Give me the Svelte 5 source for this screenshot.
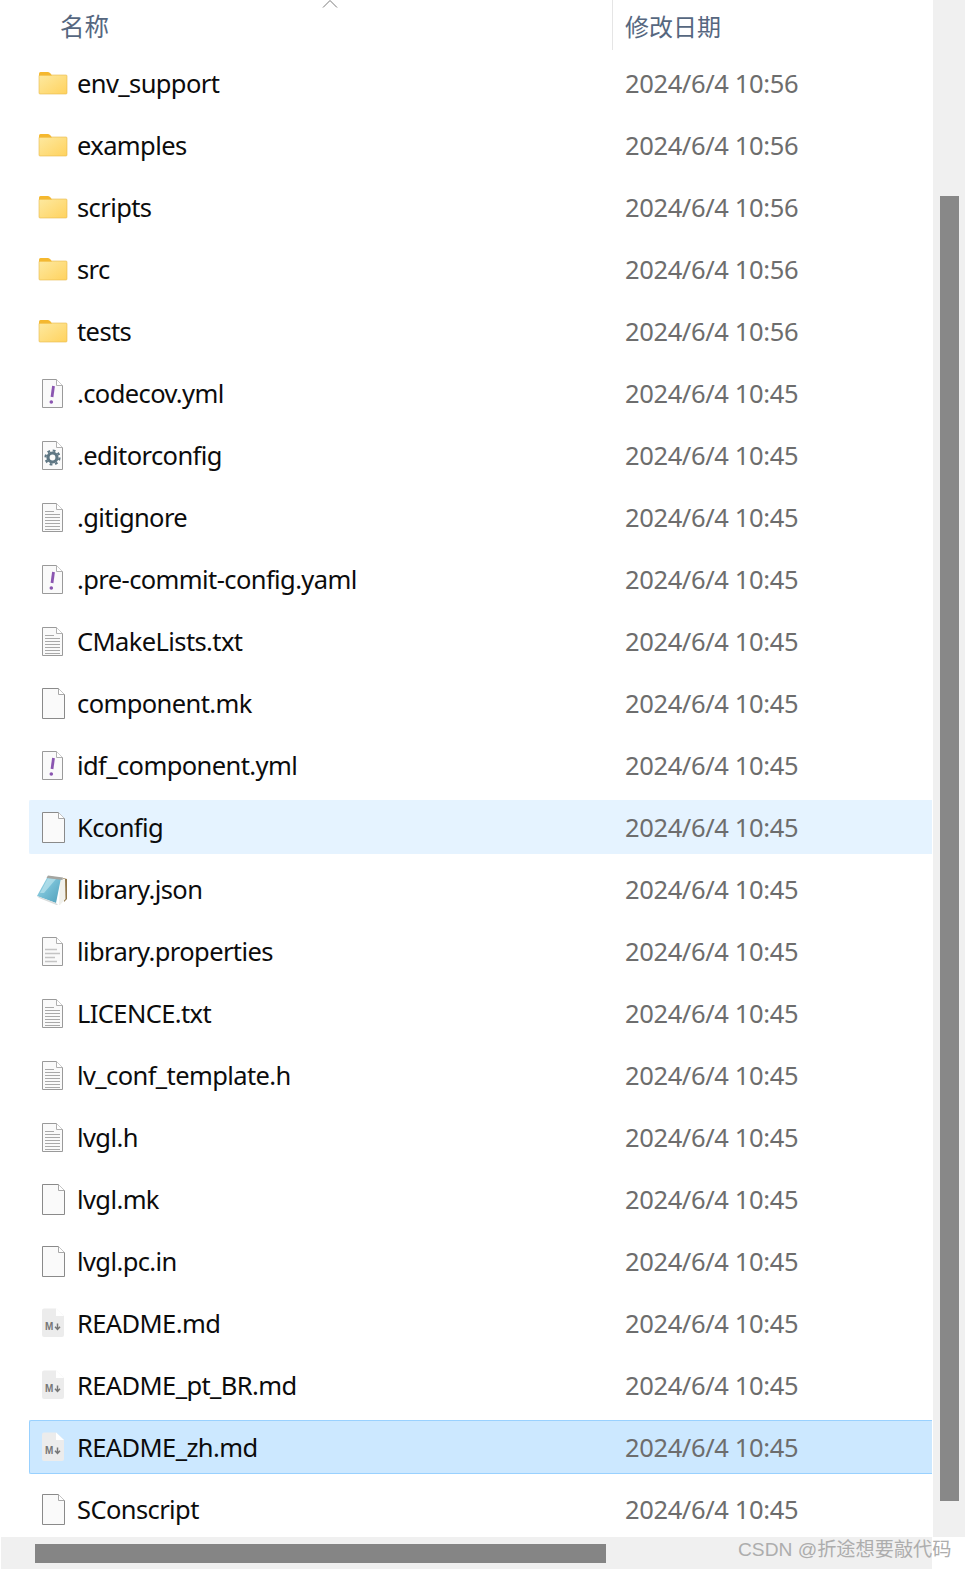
<script>
  const files = [
    { name: 'env_support', date: '2024/6/4 10:56', icon: 'folder' },
    { name: 'examples', date: '2024/6/4 10:56', icon: 'folder' },
    { name: 'scripts', date: '2024/6/4 10:56', icon: 'folder' },
    { name: 'src', date: '2024/6/4 10:56', icon: 'folder' },
    { name: 'tests', date: '2024/6/4 10:56', icon: 'folder' },
    { name: '.codecov.yml', date: '2024/6/4 10:45', icon: 'yaml' },
    { name: '.editorconfig', date: '2024/6/4 10:45', icon: 'gear' },
    { name: '.gitignore', date: '2024/6/4 10:45', icon: 'text' },
    { name: '.pre-commit-config.yaml', date: '2024/6/4 10:45', icon: 'yaml' },
    { name: 'CMakeLists.txt', date: '2024/6/4 10:45', icon: 'text' },
    { name: 'component.mk', date: '2024/6/4 10:45', icon: 'blank' },
    { name: 'idf_component.yml', date: '2024/6/4 10:45', icon: 'yaml' },
    { name: 'Kconfig', date: '2024/6/4 10:45', icon: 'blank', state: 'hover' },
    { name: 'library.json', date: '2024/6/4 10:45', icon: 'notepad' },
    { name: 'library.properties', date: '2024/6/4 10:45', icon: 'props' },
    { name: 'LICENCE.txt', date: '2024/6/4 10:45', icon: 'text' },
    { name: 'lv_conf_template.h', date: '2024/6/4 10:45', icon: 'text' },
    { name: 'lvgl.h', date: '2024/6/4 10:45', icon: 'text' },
    { name: 'lvgl.mk', date: '2024/6/4 10:45', icon: 'blank' },
    { name: 'lvgl.pc.in', date: '2024/6/4 10:45', icon: 'blank' },
    { name: 'README.md', date: '2024/6/4 10:45', icon: 'md' },
    { name: 'README_pt_BR.md', date: '2024/6/4 10:45', icon: 'md' },
    { name: 'README_zh.md', date: '2024/6/4 10:45', icon: 'md', state: 'selected' },
    { name: 'SConscript', date: '2024/6/4 10:45', icon: 'blank' }
  ];

  const ruled = [9, 12, 15, 18, 21, 24, 27];
</script>

<div class="window">
  <div class="main">
    <div class="list">
      <header class="head">
        <div class="head-name">
          名称
          <svg class="sort" width="16" height="8" viewBox="0 0 16 8"><path d="M1 7.500L8 .5L15 7.500" fill="none" stroke="#7a7a7a" stroke-width="1"/></svg>
        </div>
        <div class="head-date">修改日期</div>
      </header>

      {#each files as f}
        <div class="row {f.state || ''}">
          <div class="icon">
            {#if f.icon === 'folder'}
              <svg width="30" height="24" viewBox="0 0 30 24">
                <defs>
                  <linearGradient id="fold" x1="0" y1="0" x2="1" y2="1">
                    <stop offset="0" stop-color="#fde9a0"/>
                    <stop offset="1" stop-color="#ffd25e"/>
                  </linearGradient>
                </defs>
                <path d="M1 5V2.500Q1 1 2.500 1H10Q11.500 1 12.500 2.500L14 5Z" fill="#f5b82e"/>
                <rect x="1" y="4" width="28" height="19" rx="1" fill="url(#fold)" stroke="#e8b84a" stroke-width=".6"/>
                <path d="M1 3.500H13L14 4.500H1Z" fill="#f5b82e"/>
              </svg>
            {:else if f.icon === 'notepad'}
              <svg width="34" height="32" viewBox="0 0 34 32">
                <defs>
                  <linearGradient id="cover" x1="0" y1="0" x2="1" y2="1">
                    <stop offset="0" stop-color="#a6dcea"/>
                    <stop offset=".5" stop-color="#74bdd4"/>
                    <stop offset="1" stop-color="#4f9fba"/>
                  </linearGradient>
                </defs>
                <path d="M27 5L31 6L31 26L28 29Z" fill="#8f7448"/>
                <path d="M24 5L29 6L29.500 26L23 33Z" fill="#f1f1ec"/>
                <path d="M12 3L25 5L20 30L1 23Z" fill="url(#cover)"/>
                <path d="M12 5L20 6L8 20L4 20Z" fill="#c4e9f2" opacity=".6"/>
                <path d="M1 23L20 30L23 33L3 25Z" fill="#d8dcdc"/>
                <path d="M12 2.500L27 4.500L26.500 7L10.500 5Z" fill="#a5a5a0"/>
              </svg>
            {:else if f.icon === 'md'}
              <svg width="32" height="32" viewBox="0 0 32 32">
                <path d="M5 3.500Q5 1.500 7 1.500H19L27 9V28Q27 30 25 30H7Q5 30 5 28Z" fill="#ececec"/>
                <path d="M19 1.500V9H27Z" fill="#fff"/>
                <text x="8" y="22.700" class="md-mark">M</text>
                <path d="M20.500 16.500V22M18 19.800L20.500 22.500L23 19.800" fill="none" stroke="#777" stroke-width="1.500"/>
              </svg>
            {:else}
              <svg width="32" height="32" viewBox="0 0 32 32">
                {#if f.icon === 'blank'}
                  <path d="M5.500 1.500H21.500L27.500 7.500V31.500H5.500Z" fill="#fafafa" stroke="#8a8a8a"/>
                  <path d="M21.500 1.500V7.500H27.500" fill="#fff" stroke="#a8a8a8"/>
                {:else}
                  <path d="M5.500 2.500H19.500L25.500 8.500V30.500H5.500Z" fill="#fafafa" stroke="#9a9a9a"/>
                  <path d="M19.500 2.500V8.500H25.500" fill="#fff" stroke="#b0b0b0"/>
                  {#if f.icon === 'text'}
                    {#each ruled as y}
                      <path d="M8 {y + 1.500}H{y < 10 ? 17 : 23}" stroke="#a9a9a9"/>
                    {/each}
                  {:else if f.icon === 'props'}
                    <path d="M8 14.500H20M8 18.500H23M8 22.500H18M8 26.500H20" stroke="#c4c4c4" stroke-width="1.500"/>
                  {:else if f.icon === 'yaml'}
                    <path d="M16.500 9L15 20" stroke="#8a55b0" stroke-width="2.800"/>
                    <circle cx="14.300" cy="25" r="1.800" fill="#8a55b0"/>
                  {:else if f.icon === 'gear'}
                    <circle cx="15.500" cy="18.500" r="4.500" fill="none" stroke="#5f7784" stroke-width="3.200"/>
                    <circle cx="15.500" cy="18.500" r="7" fill="none" stroke="#5f7784" stroke-width="2.200" stroke-dasharray="2.800 2.700"/>
                  {/if}
                {/if}
              </svg>
            {/if}
          </div>
          <div class="name">{f.name}</div>
          <div class="date">{f.date}</div>
        </div>
      {/each}
    </div>

    <div class="vbar"><div class="vthumb"></div></div>
  </div>

  <div class="hbar"><div class="hthumb"></div></div>
  <div class="mark">CSDN @折途想要敲代码</div>
</div>

<style>
  :global(body) {
    margin: 0;
    background: #fff;
  }

  .window {
    position: relative;
    width: 965px;
    height: 1569px;
    overflow: hidden;
    font-family: 'Noto Sans', 'Noto Sans CJK SC', sans-serif;
  }

  .main {
    display: flex;
    height: 1537px;
  }

  .list {
    flex: 1;
    padding: 0 1px 0 29px;
    overflow: hidden;
  }

  .head {
    display: flex;
    height: 50px;
    margin-bottom: 6px;
    color: #56677f;
    font-size: 24px;
  }

  .head-name {
    position: relative;
    width: 583px;
    padding-left: 31px;
    font-size: 24.5px;
    line-height: 53px;
    box-sizing: border-box;
  }

  .sort {
    position: absolute;
    left: 293px;
    top: 0;
  }

  .head-date {
    flex: 1;
    padding-left: 12px;
    line-height: 53px;
    border-left: 1px solid #e5e5e5;
  }

  .row {
    display: flex;
    align-items: center;
    height: 54px;
    margin-bottom: 8px;
    box-sizing: border-box;
    border: 1px solid transparent;
    border-right: 0;
    border-radius: 2px 0 0 2px;
  }

  .row.hover {
    background: #e5f3ff;
    border-color: #e5f3ff;
  }

  .row.selected {
    background: #cce8ff;
    border-color: #99d1ff;
  }

  .icon {
    display: flex;
    justify-content: center;
    width: 46px;
    margin-right: 1px;
    flex: none;
  }

  .name {
    width: 547px;
    flex: none;
    color: #0c0c0c;
    font-size: 25.5px;
    letter-spacing: -0.6px;
  }

  .date {
    color: #6d6d6d;
    font-size: 25.5px;
    letter-spacing: -0.37px;
    padding-left: 1px;
  }

  .md-mark {
    font-size: 10px;
    font-weight: 700;
    fill: #777;
    font-family: 'Liberation Sans', sans-serif;
  }

  .vbar {
    width: 32px;
    flex: none;
    background: #f0f0f0;
    padding: 196px 6px 0 7px;
    box-sizing: border-box;
  }

  .vthumb {
    height: 1305px;
    background: #888;
  }

  .hbar {
    width: 931px;
    height: 32px;
    margin-left: 1px;
    padding: 7px 0 0 34px;
    background: #f0f0f0;
    box-sizing: border-box;
  }

  .hthumb {
    width: 571px;
    height: 19px;
    background: #858585;
  }

  .mark {
    position: absolute;
    left: 738px;
    top: 1535px;
    color: #adadad;
    font-size: 19.2px;
    line-height: 30px;
    white-space: nowrap;
    font-family: 'Liberation Sans', 'Noto Sans CJK SC', sans-serif;
  }
</style>
